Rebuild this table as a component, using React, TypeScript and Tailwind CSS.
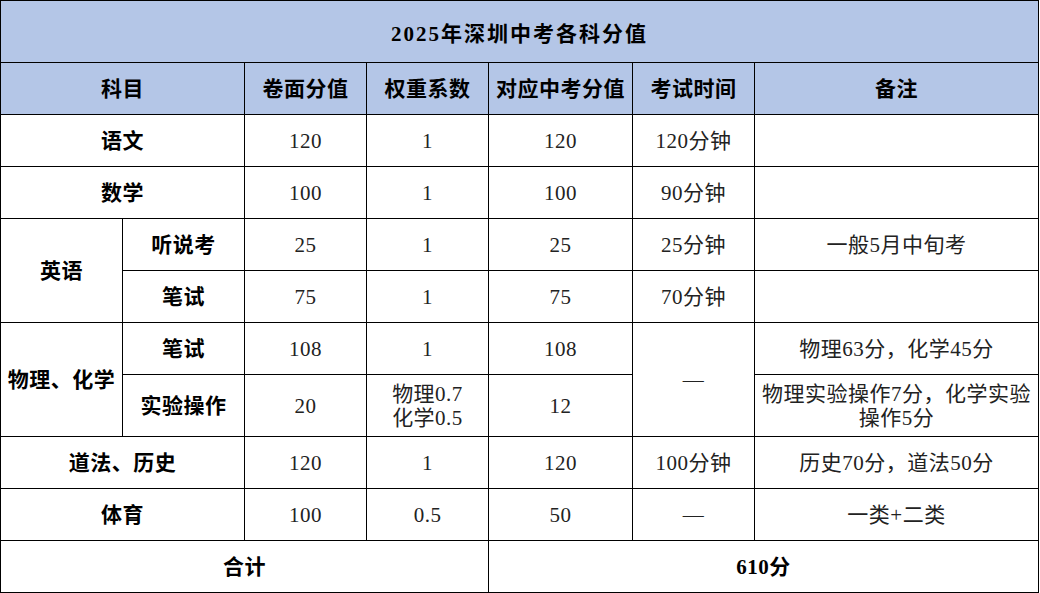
import React from 'react';

const cell = 'border border-black text-center align-middle';
const bold = 'font-bold text-black';
const data = 'text-[#222]';

export default function App() {
  return (
    <div
      className="w-[1040px] h-[593px] bg-white overflow-hidden"
      style={{ fontFamily: '"Liberation Serif", "Noto Sans CJK SC", serif' }}
    >
      <table className="table-fixed border-collapse w-[1039px] text-[21px] leading-[26px] tracking-[0.5px]">
        <colgroup>
          <col className="w-[122px]" />
          <col className="w-[122px]" />
          <col className="w-[122px]" />
          <col className="w-[122px]" />
          <col className="w-[144px]" />
          <col className="w-[122px]" />
          <col />
        </colgroup>
        <tbody>
          <tr className="h-[62px] bg-[#b4c6e7]">
            <td colSpan={7} className={`${cell} ${bold} tracking-[2px] pt-1`}>
              2025年深圳中考各科分值
            </td>
          </tr>
          <tr className="h-[52px] bg-[#b4c6e7]">
            <td colSpan={2} className={`${cell} ${bold}`}>科目</td>
            <td className={`${cell} ${bold}`}>卷面分值</td>
            <td className={`${cell} ${bold}`}>权重系数</td>
            <td className={`${cell} ${bold}`}>对应中考分值</td>
            <td className={`${cell} ${bold}`}>考试时间</td>
            <td className={`${cell} ${bold}`}>备注</td>
          </tr>
          <tr className="h-[52px]">
            <td colSpan={2} className={`${cell} ${bold}`}>语文</td>
            <td className={`${cell} ${data}`}>120</td>
            <td className={`${cell} ${data}`}>1</td>
            <td className={`${cell} ${data}`}>120</td>
            <td className={`${cell} ${data}`}>120分钟</td>
            <td className={`${cell} ${data}`}></td>
          </tr>
          <tr className="h-[52px]">
            <td colSpan={2} className={`${cell} ${bold}`}>数学</td>
            <td className={`${cell} ${data}`}>100</td>
            <td className={`${cell} ${data}`}>1</td>
            <td className={`${cell} ${data}`}>100</td>
            <td className={`${cell} ${data}`}>90分钟</td>
            <td className={`${cell} ${data}`}></td>
          </tr>
          <tr className="h-[52px]">
            <td rowSpan={2} className={`${cell} ${bold}`}>英语</td>
            <td className={`${cell} ${bold}`}>听说考</td>
            <td className={`${cell} ${data}`}>25</td>
            <td className={`${cell} ${data}`}>1</td>
            <td className={`${cell} ${data}`}>25</td>
            <td className={`${cell} ${data}`}>25分钟</td>
            <td className={`${cell} ${data}`}>一般5月中旬考</td>
          </tr>
          <tr className="h-[52px]">
            <td className={`${cell} ${bold}`}>笔试</td>
            <td className={`${cell} ${data}`}>75</td>
            <td className={`${cell} ${data}`}>1</td>
            <td className={`${cell} ${data}`}>75</td>
            <td className={`${cell} ${data}`}>70分钟</td>
            <td className={`${cell} ${data}`}></td>
          </tr>
          <tr className="h-[52px]">
            <td rowSpan={2} className={`${cell} ${bold}`}>物理、化学</td>
            <td className={`${cell} ${bold}`}>笔试</td>
            <td className={`${cell} ${data}`}>108</td>
            <td className={`${cell} ${data}`}>1</td>
            <td className={`${cell} ${data}`}>108</td>
            <td rowSpan={2} className={`${cell} ${data}`}>—</td>
            <td className={`${cell} ${data}`}>物理63分，化学45分</td>
          </tr>
          <tr className="h-[62px]">
            <td className={`${cell} ${bold}`}>实验操作</td>
            <td className={`${cell} ${data}`}>20</td>
            <td className={`${cell} ${data} leading-[24px]`}>
              物理0.7
              <br />
              化学0.5
            </td>
            <td className={`${cell} ${data}`}>12</td>
            <td className={`${cell} ${data} leading-[24px]`}>
              物理实验操作7分，化学实验
              <br />
              操作5分
            </td>
          </tr>
          <tr className="h-[52px]">
            <td colSpan={2} className={`${cell} ${bold}`}>道法、历史</td>
            <td className={`${cell} ${data}`}>120</td>
            <td className={`${cell} ${data}`}>1</td>
            <td className={`${cell} ${data}`}>120</td>
            <td className={`${cell} ${data}`}>100分钟</td>
            <td className={`${cell} ${data}`}>历史70分，道法50分</td>
          </tr>
          <tr className="h-[52px]">
            <td colSpan={2} className={`${cell} ${bold}`}>体育</td>
            <td className={`${cell} ${data}`}>100</td>
            <td className={`${cell} ${data}`}>0.5</td>
            <td className={`${cell} ${data}`}>50</td>
            <td className={`${cell} ${data}`}>—</td>
            <td className={`${cell} ${data}`}>一类+二类</td>
          </tr>
          <tr className="h-[52px]">
            <td colSpan={4} className={`${cell} ${bold}`}>合计</td>
            <td colSpan={3} className={`${cell} ${bold}`}>610分</td>
          </tr>
        </tbody>
      </table>
    </div>
  );
}
